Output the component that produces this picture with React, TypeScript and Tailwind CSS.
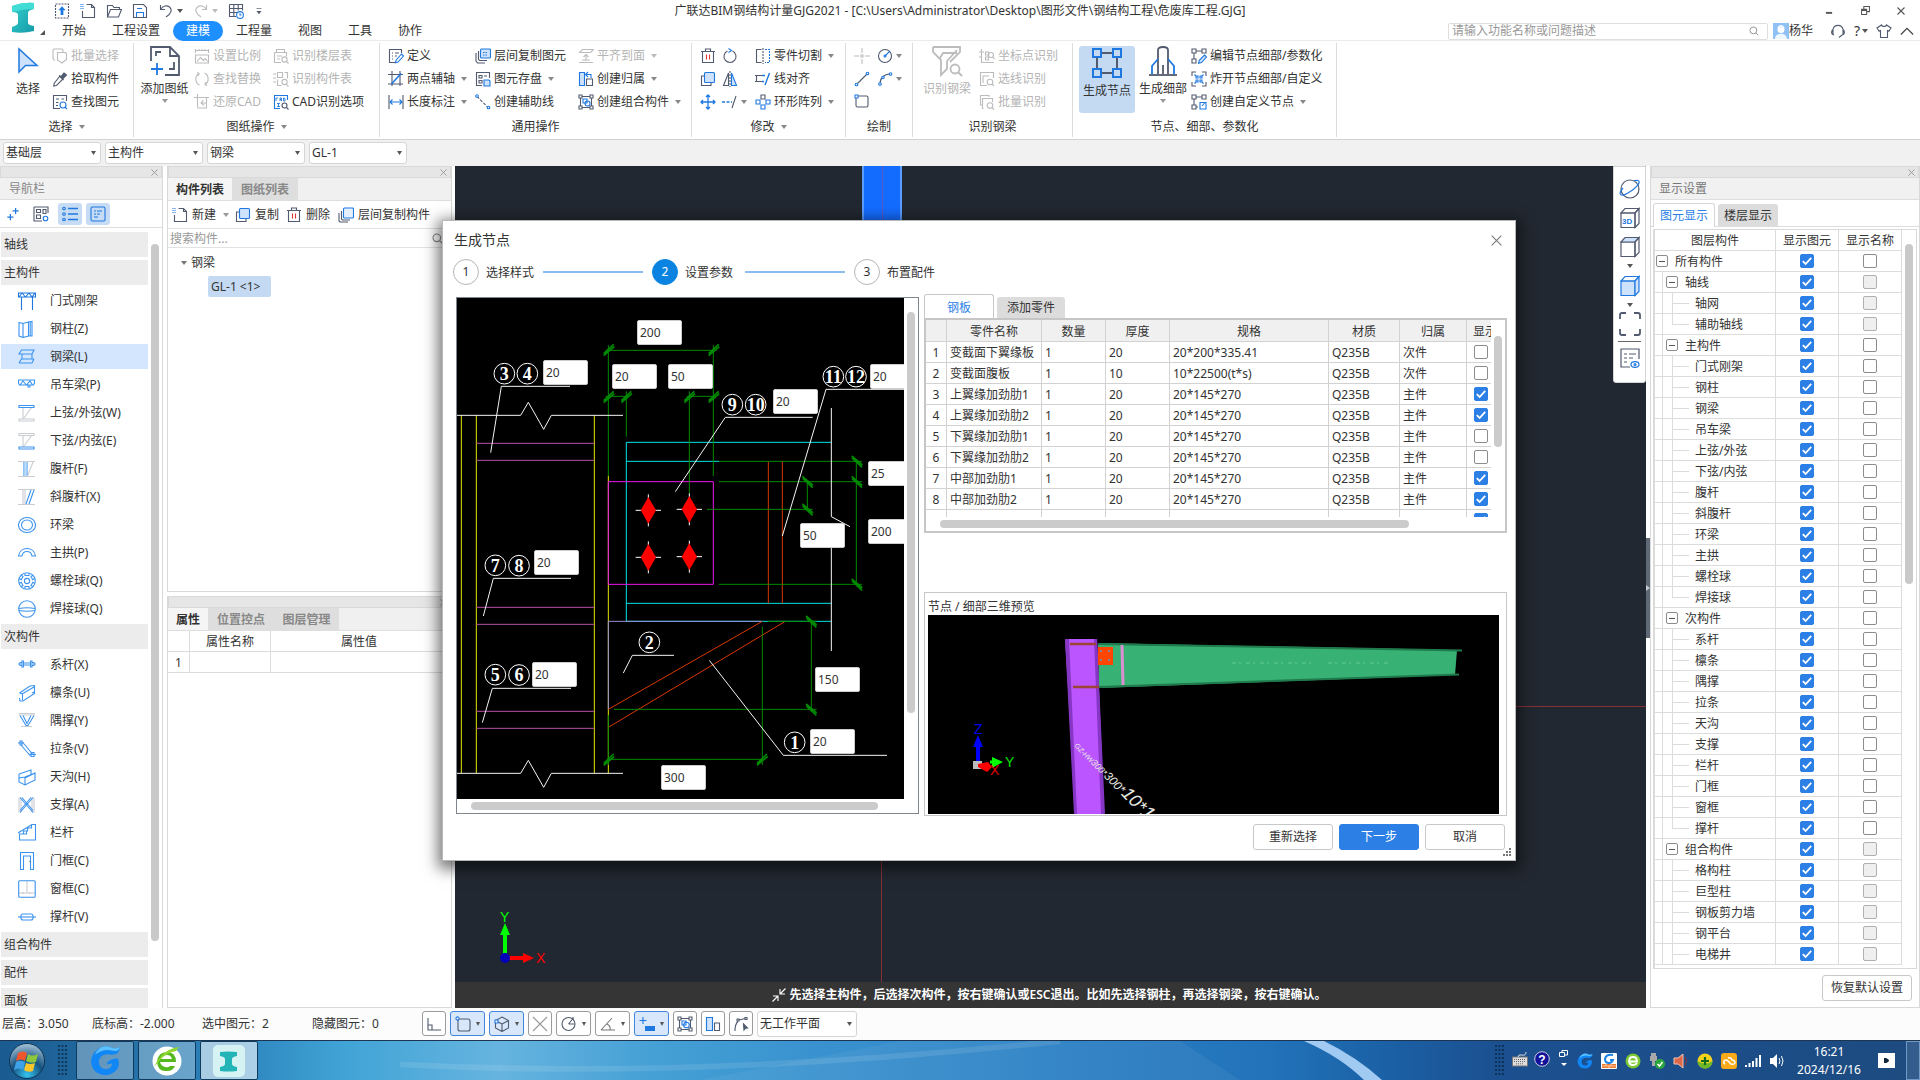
import React from "react";

const FONT = "font-['Noto_Sans','Noto_Sans_CJK_SC',sans-serif]";
const D = "#515a6e";
const B = "#1f78e0";
const G = "#bcbcbc";

/* ---------- shared bits ---------- */

function Svg({ size = 16, children, stroke = D, vb = "0 0 16 16" }: { size?: number; children: React.ReactNode; stroke?: string; vb?: string }) {
  return (
    <svg width={size} height={size} viewBox={vb} fill="none" stroke={stroke} strokeWidth={1.1} className="shrink-0" aria-hidden="true">
      {children}
    </svg>
  );
}

function Arrow({ color = "#777" }: { color?: string }) {
  return (
    <svg width="6" height="4" viewBox="0 0 6 4" className="shrink-0" aria-hidden="true">
      <path d="M0 0h6L3 4z" fill={color} />
    </svg>
  );
}

function Cross({ size = 8, color = "#8a8a8a" }: { size?: number; color?: string }) {
  return (
    <svg width={size} height={size} viewBox="0 0 8 8" stroke={color} strokeWidth={size > 10 ? 0.8 : 1.1} className="shrink-0" aria-hidden="true">
      <path d="M.5.5l7 7M7.5.5l-7 7" />
    </svg>
  );
}

function Check({ label, checked, disabled = false }: { label: string; checked: boolean; disabled?: boolean }) {
  return (
    <span className="inline-grid size-[14px] align-middle">
      <input
        type="checkbox"
        aria-label={label}
        defaultChecked={checked}
        disabled={disabled}
        className="peer col-start-1 row-start-1 size-[14px] appearance-none rounded-[2px] border border-[#8c8c8c] bg-white checked:border-[#2b7fe5] checked:bg-[#2b7fe5] disabled:border-[#b0b0b0] disabled:bg-[#efefef]"
      />
      <svg viewBox="0 0 14 14" className="pointer-events-none col-start-1 row-start-1 hidden size-[14px] peer-checked:block" fill="none" stroke="#fff" strokeWidth="1.8" aria-hidden="true">
        <path d="M2.8 7.2l2.8 2.8 5.6-6.2" />
      </svg>
    </span>
  );
}

function Combo({ label, options, cls }: { label: string; options: string[]; cls: string }) {
  return (
    <span className={`inline-grid items-center ${cls}`}>
      <select aria-label={label} className="col-start-1 row-start-1 h-full w-full appearance-none rounded-[3px] border border-[#d5d5d5] bg-white pl-[2px] text-xs text-[#333]">
        {options.map((o) => (
          <option key={o}>{o}</option>
        ))}
      </select>
      <span className="pointer-events-none col-start-1 row-start-1 mr-[5px] justify-self-end">
        <svg width="5" height="4" viewBox="0 0 5 4" className="block" aria-hidden="true">
          <path d="M0 0h5L2.5 4z" fill="#555" />
        </svg>
      </span>
    </span>
  );
}

/* ---------- icons ---------- */

const ic: Record<string, React.ReactNode> = {
  upload: <Svg><rect x="1.5" y="1" width="13" height="14" strokeDasharray="2 1" /><path d="M8 3.2l3.6 4H9.4V12H6.600V7.200H4.400z" fill={B} stroke="none" /></Svg>,
  newdoc: <Svg><path d="M6.500 1.500h5l3 3v10h-12V8" /><path d="M11.500 1.500v3h3" /><path d="M.5 1.500h4M.5 3.500h4M.5 5.500h4M1 1v5M3 1v5" stroke={B} strokeDasharray="1 1" /></Svg>,
  open: <Svg><path d="M1.500 14V2.500h5l1.500 2h5.500v2M1.500 14l3-7.500h11L12.500 14z" /></Svg>,
  save: <Svg><path d="M1.500 1.500h10l3 3v10h-13z" /><path d="M4.500 14V9.500h7V14M5 5.500h5" stroke={B} /></Svg>,
  undo: <Svg><path d="M2.500 2v4.500H7M2.500 6.500C5 2.500 9 2 11.500 4c3 2.500 2 6.500-3.500 10" /></Svg>,
  redo: <Svg stroke={G}><path d="M13.500 2v4.500H9M13.500 6.500C11 2.500 7 2 4.500 4c-3 2.500-2 6.500 3.500 10" /></Svg>,
  grid: <Svg><path d="M1.500 1.500h13v6M1.500 1.500v12H8M1.500 5.500h13M1.500 9.500H9M5.800 1.500v12M10.200 1.500v6" /><circle cx="12" cy="12" r="3.400" stroke={B} /><path d="M12 10.300V12h1.600" stroke={B} /></Svg>,
  more: <Svg size={10}><path d="M4 4h8" /><path d="M4 8h8l-4 5z" fill={D} stroke="none" /></Svg>,
  batch: <Svg stroke={G}><path d="M3 12H2L1 10V2l1-1h8l1 1v2M5.500 4.500h8l1 1v6L10 15l-4.500-3z" /></Svg>,
  pick: <Svg><path d="M8 5l3 3-6.500 6.500-2.800.6.600-2.900z" /><path d="M7 4.500l4.500 4.500M9 5.500L12 2l2.500 2L11 7.500z" fill={D} /></Svg>,
  find: <Svg><path d="M14.500 7V1.500h-13v13H8" /><path d="M4 5h3M4 8.500h2.500M4 11.500h2M9.500 5H12" /><circle cx="11" cy="11" r="3" stroke={B} /><path d="M13 13l2 2" stroke={B} /></Svg>,
  scale: <Svg stroke={G}><path d="M1 2.500h14M1.500 1v4M14.500 1v4M5 1v2M8 1v2M11 1v2M1.500 7h13v8h-13zM3 13.500l3.500-4 3 3 2-2 2 3" /></Svg>,
  replace: <Svg stroke={G}><path d="M5.500 14C1 12 .500 5 5 2.500L3 1.500M5 2.500l-1 2.500M10.500 2C15 4 15.500 11 11 13.500l2 1M11 13.500l1-2.500" /></Svg>,
  restore: <Svg stroke={G}><path d="M3.500 0v13M0 3.500h15M12.500 3.500V14H3M9.500 6L7 9l3 2.500M7 9h5" /></Svg>,
  floor: <Svg stroke={G}><path d="M3.500 4.500v-3h8v3M1.500 4.500h12v4M1.500 4.500v10H8M4 8h5M4 11h3" /><circle cx="11.500" cy="11.500" r="2.600" /><path d="M13.500 13.500l2 2" /></Svg>,
  comp: <Svg stroke={G}><path d="M0 3h3M0 7h3M0 11h3M4.500 1.500h5v5h-5zM4.500 8.500v6h4M11.500 1.500h3v6" /><circle cx="11.500" cy="11" r="2.600" /><path d="M13.500 13.500l2 2" /></Svg>,
  cad: <Svg><path d="M14.500 6V1.500h-13v13H7" stroke={B} /><path d="M3 7V4h2M7 7V4h1.500v3M7 5.500h1.500M10.500 4v3h1.500V5l-.500-1zM4 9.500h3M5.500 9.500v3M4 12.500h3" stroke={B} strokeWidth={0.9} /><circle cx="11.500" cy="11.500" r="2.500" /><path d="M13.500 13.500l2 2" /></Svg>,
  define: <Svg><path d="M13.500 5V1.500h-12v13h6M4 5h1M7 5h4M4 8h1M7 8h2M4 11h1" /><path d="M13.500 6l2 2-5.500 6-2.500.800.600-2.600z" stroke={B} /></Svg>,
  axis2: <Svg><path d="M4 0v15M0 3.500h15M12 0v15M0 13h15" /><path d="M3.500 13L13 2.500" stroke={B} strokeWidth={1.600} /></Svg>,
  length: <Svg><path d="M1 1v14M15 1v14" /><path d="M2 8h12M4.500 5.500L2 8l2.500 2.500M11.500 5.500L14 8l-2.500 2.500" stroke={B} /></Svg>,
  layercopy: <Svg><path d="M1 5v8l1.500 2H10M3.500 3v8l1 1.500H12" /><rect x="5.500" y="1" width="10" height="9" rx="1" stroke={B} fill="#cfe2fb" /><path d="M8 4.500h5M8 7h5" stroke={B} strokeDasharray="1.500 1" /></Svg>,
  store: <Svg><path d="M14.500 7V1.500h-13v13H7" /><path d="M4 4.500h3v2.500H4zM9 5h3M4 9.500h3V12H4z" /><path d="M9 9h5l1 1v5H9z" stroke={B} fill="#cfe2fb" /></Svg>,
  auxline: <Svg stroke={B}><path d="M2 2.500l11 11" stroke={D} strokeDasharray="3 1.500" /><circle cx="2" cy="2" r="1.300" fill="#fff" /><circle cx="13.500" cy="13.500" r="1.300" fill="#fff" /></Svg>,
  flush: <Svg stroke={G}><path d="M4.500 1.500h11l-3 3h-11zM1 14.500h14M8 13V7M5.500 9L8 6.500 10.500 9M4 12h8" /></Svg>,
  belong: <Svg><path d="M1.500 1.500h5v13h-5z" stroke={B} fill="#cfe2fb" /><path d="M8.500 8h6v6.500h-6z" /><path d="M8 3.500h5V7M10 1L7.500 3.500 10 6" stroke={B} /></Svg>,
  group: <Svg><path d="M2.500 2.500h11v11h-11z" /><path d="M1 1h3v3H1zM12 1h3v3h-3zM1 12h3v3H1zM12 12h3v3h-3z" fill="#fff" /><path d="M5 5h4v4H5z" stroke={B} /><circle cx="9.500" cy="9.500" r="2.500" stroke={B} /></Svg>,
  trash: <Svg><path d="M1 3.500h14M5.500 3V1h5v2M2.500 3.500v11h11v-11" /><path d="M6.500 6.500v5M9.500 6.500v5" stroke="#d33" /></Svg>,
  rotate: <Svg><path d="M10.500 3a6 6 0 1 1-5 0" /><path d="M6.500.500l3 2-3 2" stroke={B} /></Svg>,
  split: <Svg><path d="M6.500 1.500h-5v13h5" /><path d="M8 0v16" stroke={D} strokeDasharray="2 1" /><path d="M10 1.500h4.500v13H10" stroke={B} strokeDasharray="2 1" /></Svg>,
  copy: <Svg><path d="M4 5H1.500v9.500H11V12" /><rect x="4.500" y="1.500" width="10" height="10" rx="1" stroke={B} fill="#cfe2fb" /></Svg>,
  mirror: <Svg><path d="M6.500 2v12.500h-5z" /><path d="M9.500 2v12.500h5z" stroke={B} fill="#cfe2fb" /><path d="M8 0v16" strokeDasharray="2 1" /></Svg>,
  align: <Svg><path d="M0 4.500h7M1.500 4.500v6M0 10.500h7" /><path d="M7 4.500h3M7 10.500h2M10 14l4.500-12" stroke={B} strokeWidth={1.400} /></Svg>,
  move: <Svg stroke={B}><path d="M8 1v14M1 8h14M6 3l2-2 2 2M6 13l2 2 2-2M3 6L1 8l2 2M13 6l2 2-2 2" strokeWidth={1.300} /></Svg>,
  extend: <Svg><path d="M0 8h10" stroke={B} strokeDasharray="3 1.500" strokeWidth={1.400} /><path d="M10 14l4-12" /></Svg>,
  array: <Svg><path d="M6 1h4v4H6z" /><path d="M1 6h4v4H1zM11 6h4v4h-4zM6 11h4v4H6z" stroke={B} /></Svg>,
  point: <Svg stroke={G}><path d="M8 0v5M8 11v5M0 8h5M11 8h5M7 7h2v2H7z" /></Svg>,
  circle: <Svg><circle cx="8" cy="8" r="6.500" /><path d="M8 8l4.500-4.500" stroke={B} /><circle cx="8" cy="8" r="1" stroke={B} /></Svg>,
  line: <Svg><path d="M2.500 13.500l11-11" /><circle cx="2.500" cy="13.500" r="1.300" stroke={B} fill="#fff" /><circle cx="13.500" cy="2.500" r="1.300" stroke={B} fill="#fff" /></Svg>,
  arc: <Svg><path d="M3 13C3 7 7 3 13 3" /><circle cx="3" cy="13" r="1.300" stroke={B} fill="#fff" /><circle cx="13.500" cy="3" r="1.300" stroke={B} fill="#fff" /><circle cx="6" cy="6.500" r="1.200" stroke={B} fill="#fff" /></Svg>,
  rect: <Svg><rect x="2" y="2" width="12" height="11" rx="1.500" /><path d="M1 1h3v3H1z" stroke={B} fill="#fff" /></Svg>,
  coord: <Svg stroke={G}><path d="M2.500 1v13.500H15M0 4h5M0 9h2M6.500 4h3v3h-3zM6.500 9h3v3h-3z" /><circle cx="12" cy="7" r="2.500" /><path d="M13.500 9l2 2" /></Svg>,
  selline: <Svg stroke={G}><path d="M14.500 7V1.500h-13v13H8M4 12V5h6" /><circle cx="11" cy="11" r="2.800" /><path d="M13 13l2 2" /></Svg>,
  batchid: <Svg stroke={G}><path d="M3 11H1.500v-9.500H10V3M4.500 14.500h-1V4.500h10V8" /><circle cx="11" cy="11.500" r="2.800" /><path d="M13 13.500l2 2" /></Svg>,
  editnode: <Svg><path d="M1 1h4v4H1zM11 1h4v4h-4zM5 3h6M3 5v6M1 11h4v4H1z" /><path d="M13.500 7l2 2-5 5.500-3 .800.800-3z" stroke={B} fill="#cfe2fb" /></Svg>,
  explode: <Svg><path d="M1 5V1h4M11 1h4v4M1 11v4h4M15 11v4h-4" /><path d="M5 5h2v2H5zM9 5h2v2H9zM5 9h2v2H5zM9 9h2v2H9zM3.500 3.500l2 2M12.500 3.500l-2 2M3.500 12.500l2-2M12.500 12.500l-2-2" stroke={B} /></Svg>,
  custnode: <Svg><path d="M1 1h4v4H1zM11 1h4v4h-4zM5 3h6M3 5v6M1 11h4v4H1zM5 13h2" /><path d="M9 8.500h6v6.500H9z" stroke={B} /><path d="M14.500 8L11 12" stroke={B} /></Svg>,
};

function Item({ icon, text, arrow = false, off = false }: { icon: string; text: string; arrow?: boolean; off?: boolean }) {
  return (
    <button type="button" disabled={off} className={`flex h-[23px] items-center gap-[3px] whitespace-nowrap text-xs ${off ? "text-[#b4b4b4]" : "text-[#333]"}`}>
      {ic[icon]}
      {text}
      {arrow && <span className="ml-[3px]"><Arrow color={off ? G : "#888"} /></span>}
    </button>
  );
}

function IconButton({ icon, label, arrow = false }: { icon: string; label: string; arrow?: boolean }) {
  return (
    <button type="button" aria-label={label} className="flex h-[23px] items-center gap-[3px]">
      {ic[icon]}
      {arrow && <Arrow color="#888" />}
    </button>
  );
}

function Group({ label, cls, arrow = false, children }: { label: string; cls: string; arrow?: boolean; children: React.ReactNode }) {
  return (
    <section aria-label={label} className={`my-[2px] flex shrink-0 flex-col border-r border-[#dcdcdc] ${cls}`}>
      <div className="flex h-[74px] pt-px">{children}</div>
      <div className="flex h-5 items-center justify-center gap-[6px] text-xs text-[#333]">
        {label}
        {arrow && <Arrow color="#888" />}
      </div>
    </section>
  );
}

function Big({ text, cls, arrow = false, children }: { text: string; cls: string; arrow?: boolean; children: React.ReactNode }) {
  return (
    <button type="button" className={`flex flex-col items-center whitespace-nowrap rounded-[3px] text-xs ${cls}`}>
      <span className="flex h-[34px] items-center">{children}</span>
      <span className="mt-px leading-5">{text}</span>
      {arrow && <Arrow color="#999" />}
    </button>
  );
}

function Header() {
  const tabs = ["开始", "工程设置", "建模", "工程量", "视图", "工具", "协作"];
  return (
    <header className="grid h-[41px] shrink-0 grid-cols-[1fr_auto_1fr] border-b border-[#ebebeb] bg-white text-xs text-[#333]">
      <div className="flex">
        <div className="flex w-[49px] shrink-0 gap-[5px] pl-[11px] pt-[2px]">
          <svg width="24" height="32" viewBox="0 0 24 32" aria-hidden="true">
            <defs>
              <linearGradient id="lg" x1="0" y1="0" x2="1" y2="1">
                <stop offset="0" stopColor="#35d0cc" />
                <stop offset="1" stopColor="#159aa8" />
              </linearGradient>
            </defs>
            <path d="M1 4Q12 0 23 1v6q-6 1-6 4v10q0 2 6 3v5q-11 3-22 1v-5q6-2 6-4V13q0-3-6-3z" fill="url(#lg)" />
            <path d="M1 4Q12 0 23 1v6Q12 7 1 10z" fill="#41dcd3" />
          </svg>
          <svg width="5" height="5" viewBox="0 0 5 5" className="mt-[28px]" aria-hidden="true"><path d="M5 0v5H0z" fill="#555" /></svg>
        </div>
        <div className="flex flex-col">
          <div className="flex h-[21px] items-center gap-[10px] pl-[5px]">
            {["upload", "newdoc", "open", "save"].map((n) => (
              <button key={n} type="button" aria-label={n}>{ic[n]}</button>
            ))}
            <button type="button" aria-label="撤销" className="flex items-center gap-[3px]">{ic.undo}<Arrow color="#555" /></button>
            <button type="button" aria-label="恢复" className="flex items-center gap-[3px]">{ic.redo}<Arrow color={G} /></button>
            <button type="button" aria-label="表格">{ic.grid}</button>
            <button type="button" aria-label="更多">{ic.more}</button>
          </div>
          <nav className="flex h-5">
            {tabs.map((t) => (
              <button key={t} type="button" className={`whitespace-nowrap px-[13px] leading-5 ${t === "建模" ? "rounded-full bg-[#1e8fff] text-white" : ""}`}>{t}</button>
            ))}
          </nav>
        </div>
      </div>
      <h1 className="whitespace-nowrap pt-px leading-5">广联达BIM钢结构计量GJG2021 - [C:\Users\Administrator\Desktop\图形文件\钢结构工程\危废库工程.GJG]</h1>
      <div className="flex flex-col items-end">
        <div className="flex h-[21px] items-center gap-[27px] pr-[15px]">
          <button type="button" aria-label="最小化"><Svg size={10} stroke="#555"><path d="M3 11h10" strokeWidth={3} /></Svg></button>
          <button type="button" aria-label="还原"><Svg size={9} stroke="#555"><path d="M1 6h9v9H1zM5 6V1h10v9h-5M1 8h9" strokeWidth={1.800} /></Svg></button>
          <button type="button" aria-label="关闭"><Cross color="#555" /></button>
        </div>
        <div className="flex h-5 items-center pr-[6px]">
          <label className="mr-[5px] flex h-[17px] w-[320px] items-center rounded-[2px] border border-[#dedede] pl-[3px] pr-2">
            <input aria-label="搜索功能" placeholder="请输入功能名称或问题描述" className="h-[15px] min-w-0 flex-1 bg-transparent text-xs outline-none placeholder:text-[#999]" />
            <Svg size={10} stroke="#999"><circle cx="7" cy="7" r="5.500" strokeWidth={1.600} /><path d="M11 11l4 4" strokeWidth={1.600} /></Svg>
          </label>
          <svg width="16" height="16" viewBox="0 0 16 16" aria-hidden="true"><path d="M0 0h16v16H0z" fill="#8fc1f5" /><circle cx="8" cy="6.500" r="3.500" fill="#fff" /><path d="M4.500 5C5 1 11 1 11.500 5zM2 16c0-7 12-7 12 0z" fill="#eef6ff" /></svg>
          <span>杨华</span>
          <span className="ml-[17px] flex items-center gap-2">
            <Svg><path d="M4 12C0 11 2 7 3 6.500 4 1 12 1 13 6.500c1 .500 3 4.500-1 5.500l-3 2.500M3 6.500v5M13 6.500v5" /></Svg>
            <span className="flex items-center gap-[2px] text-sm leading-4">?<Arrow color="#555" /></span>
            <Svg><path d="M5.500 2C6 4 10 4 10.500 2L15 5l-2 3-1.500-.500v7h-7v-7L3 8 1 5z" /></Svg>
            <Svg size={14} stroke="#444"><path d="M1 12l7-7 7 7" strokeWidth={1.400} /></Svg>
          </span>
        </div>
      </div>
    </header>
  );
}

function Ribbon() {
  return (
    <div className="flex h-[99px] shrink-0 border-b border-[#d3d3d3] bg-white text-[#333]">
      <Group label="选择" arrow cls="w-[134px]">
        <Big text="选择" cls="ml-1 w-12">
          <svg width="22" height="30" viewBox="0 0 22 30" aria-hidden="true"><path d="M2 3v23l6.500-6.500H20z" fill="#cfe2fb" stroke={B} strokeWidth="1.500" /></svg>
        </Big>
        <div>
          <Item icon="batch" text="批量选择" off />
          <Item icon="pick" text="拾取构件" />
          <Item icon="find" text="查找图元" />
        </div>
      </Group>
      <Group label="图纸操作" arrow cls="w-[246px]">
        <Big text="添加图纸" arrow cls="ml-[2px] mr-px w-[57px]">
          <svg width="32" height="32" viewBox="0 0 32 32" fill="none" stroke={D} strokeWidth="1.800" aria-hidden="true">
            <path d="M2 16V2h19l9 9v19H16M21 2v9h9" /><path d="M7 11V7h5M20 24h5v-7" /><path d="M8 18v12M2 24h12" stroke={B} />
          </svg>
        </Big>
        <div className="w-[79px]">
          <Item icon="scale" text="设置比例" off />
          <Item icon="replace" text="查找替换" off />
          <Item icon="restore" text="还原CAD" off />
        </div>
        <div>
          <Item icon="floor" text="识别楼层表" off />
          <Item icon="comp" text="识别构件表" off />
          <Item icon="cad" text="CAD识别选项" />
        </div>
      </Group>
      <Group label="通用操作" cls="w-[312px]">
        <div className="w-[95px] pl-2">
          <Item icon="define" text="定义" />
          <Item icon="axis2" text="两点辅轴" arrow />
          <Item icon="length" text="长度标注" arrow />
        </div>
        <div className="w-[103px]">
          <Item icon="layercopy" text="层间复制图元" />
          <Item icon="store" text="图元存盘" arrow />
          <Item icon="auxline" text="创建辅助线" />
        </div>
        <div>
          <Item icon="flush" text="平齐到面" arrow off />
          <Item icon="belong" text="创建归属" arrow />
          <Item icon="group" text="创建组合构件" arrow />
        </div>
      </Group>
      <Group label="修改" arrow cls="w-[154px]">
        <div className="w-[30px] pl-2">
          <IconButton icon="trash" label="删除" />
          <IconButton icon="copy" label="复制" />
          <IconButton icon="move" label="移动" />
        </div>
        <div className="w-[33px]">
          <IconButton icon="rotate" label="旋转" />
          <IconButton icon="mirror" label="镜像" />
          <IconButton icon="extend" label="延伸" arrow />
        </div>
        <div>
          <Item icon="split" text="零件切割" arrow />
          <Item icon="align" text="线对齐" />
          <Item icon="array" text="环形阵列" arrow />
        </div>
      </Group>
      <Group label="绘制" cls="w-[67px]">
        <div className="w-[31px] pl-2">
          <IconButton icon="point" label="点" />
          <IconButton icon="line" label="直线" />
          <IconButton icon="rect" label="矩形" />
        </div>
        <div>
          <IconButton icon="circle" label="圆" arrow />
          <IconButton icon="arc" label="弧" arrow />
        </div>
      </Group>
      <Group label="识别钢梁" cls="w-[160px]">
        <Big text="识别钢梁" cls="ml-[6px] mr-1 w-14 text-[#b4b4b4]">
          <svg width="32" height="32" viewBox="0 0 32 32" fill="none" stroke={G} strokeWidth="1.800" aria-hidden="true">
            <path d="M2 2h27v5L19 17M2 2v5l8 8v15l6-6v-8M26 5L16 16M9 13l3-5h14" /><circle cx="24" cy="24" r="4.500" /><path d="M27 27l4 4" />
          </svg>
        </Big>
        <div>
          <Item icon="coord" text="坐标点识别" off />
          <Item icon="selline" text="选线识别" off />
          <Item icon="batchid" text="批量识别" off />
        </div>
      </Group>
      <Group label="节点、细部、参数化" cls="w-[264px]">
        <Big text="生成节点" cls="ml-[6px] mr-px mt-[2px] h-[67px] w-14 bg-[#c3daf2]">
          <svg width="32" height="30" viewBox="0 0 32 30" fill="none" stroke={D} strokeWidth="2" aria-hidden="true">
            <path d="M10 5h12M10 25h12M6 9v12M26 9v12" /><path d="M2 1h8v8H2zM22 1h8v8h-8zM2 21h8v8H2zM22 21h8v8h-8z" stroke={B} />
          </svg>
        </Big>
        <Big text="生成细部" arrow cls="mr-px w-[54px]">
          <svg width="30" height="32" viewBox="0 0 30 32" fill="none" stroke={D} strokeWidth="1.800" aria-hidden="true">
            <path d="M10 29V5q0-3 5-3t5 3v24M15 20v9" /><path d="M10 14l-6 7v8M20 14l6 7v8" stroke={B} /><path d="M1 30h28" />
          </svg>
        </Big>
        <div>
          <Item icon="editnode" text="编辑节点细部/参数化" />
          <Item icon="explode" text="炸开节点细部/自定义" />
          <Item icon="custnode" text="创建自定义节点" arrow />
        </div>
      </Group>
    </div>
  );
}

/* ---------- left navigation ---------- */

const L = "#c9ccd1";
const N = "#3b93ee";
const nav: { head?: string; text?: string; icon?: React.ReactNode }[] = [
  { head: "轴线" },
  { head: "主构件" },
  { text: "门式刚架", icon: <><path d="M.5 1h17v4H.5zM3.500 5v13M14.500 5v13M1 5l3-4 3.500 4L11 1l3 4 3-4" stroke={B} /></> },
  { text: "钢柱(Z)", icon: <path d="M1 2.500l4 1v14l-4-1.500zM5 3.500L10.500 2v14L5 17.500M10.500 2L14 1.500v14.500h-3.500M12.200 2v14" /> },
  { text: "钢梁(L)", icon: <path d="M3.500 2H16l-2 4H1zM4 6v5M14 6v5M3.500 11H16M1 15l2.500-4M1 15h13l2-4" /> },
  { text: "吊车梁(P)", icon: <path d="M.500 4h16v3l-1 2h-14l-1-2zM2 9l3-4 3.500 4L12 5l2.500 4M10 9v2h2V9" /> },
  { text: "上弦/外弦(W)", icon: <><path d="M5 3v12M6 14l8-11M1 15h15v2H1z" stroke={L} /><path d="M1 1.500h15v2H1z" /></> },
  { text: "下弦/内弦(E)", icon: <><path d="M5 3v12M6 14l8-11M1 1.500h15v2H1z" stroke={L} /><path d="M1 15h15v2H1z" /></> },
  { text: "腹杆(F)", icon: <><path d="M0 1.500h17M0 16.500h17M10 15l5-13" stroke={L} /><path d="M6 2v14M9 2v14" /><path d="M7.500 2v14" stroke="#bcdcfb" strokeWidth="2" /></> },
  { text: "斜腹杆(X)", icon: <><path d="M0 1.500h17M0 16.500h17M5 2v14M7 2v14" stroke={L} /><path d="M8 16l5-14M11 16l5-14" /></> },
  { text: "环梁", icon: <><ellipse cx="9" cy="9" rx="8.500" ry="7.500" /><ellipse cx="9" cy="9" rx="5.500" ry="5" /></> },
  { text: "主拱(P)", icon: <path d="M.5 12C2 2 16 2 17.500 12h-3.500C13 6 5 6 4 12z" /> },
  { text: "螺栓球(Q)", icon: <><circle cx="9" cy="9" r="8.300" /><circle cx="9" cy="9" r="2.600" /><path d="M7 1.200v2.300h4V1.200M7 16.800v-2.300h4v2.300M1.200 6.500l2 1.200 1.800-3.200-2-1.200M16.800 6.500l-2 1.200L13 4.500l2-1.200M1.200 11.500l2-1.200L5 13.500l-2 1.200M16.800 11.500l-2-1.200-1.800 3.200 2 1.200" /></> },
  { text: "焊接球(Q)", icon: <><circle cx="9" cy="9" r="8.300" /><path d="M1 8.500q8-1.500 16 0M1 10.500q8 1.500 16 0" /></> },
  { head: "次构件" },
  { text: "系杆(X)", icon: <path d="M0 8h2M16 8h2M2 6.500h2v3H2zM14 6.500h2v3h-2zM4 5h1.500v6H4zM12.500 5H14v6h-1.500zM5.500 7h7M5.500 9h7" /> },
  { text: "檩条(U)", icon: <path d="M1.500 9L12 2l4.500-.500v8L5 17H2l-.500-3M4 10L16 3M1.500 9l3 1v6M14 9l2.500-1" /> },
  { text: "隅撑(Y)", icon: <><path d="M1 1.500h16M3 14.500h11M1 3h16" stroke={L} /><path d="M2 3.500l6 10h2l6-10M5 3.500l4 8 4-8" /></> },
  { text: "拉条(V)", icon: <path d="M0 3h6M2 1v4h2V1zM4.500 2l10 12M3 5l9 10.500M13 12.500v4h3v-4zM11 14.500h7" /> },
  { text: "天沟(H)", icon: <path d="M1 6l12-4v5M1 6v8l6 3 10-5V5l-4 2L7 10v7M1 10l6-1 10-4" /> },
  { text: "支撑(A)", icon: <><path d="M1 1.500v15M3 1.500v15M14 1.500v15M16 1.500v15" stroke={L} /><path d="M2 1.500l13 15M15 1.500l-13 15M4 1.500l11 13M2 14.500l11-13" /></> },
  { text: "栏杆", icon: <path d="M0 9L14 .500h3.500V16h-16v-6h4V7h4V4h4V1M5.500 10h3V7" /> },
  { text: "门框(C)", icon: <><path d="M2.500 17.500V.5h13v17h-3V4h-7v13.500z" /><path d="M12 9v1" stroke={D} /></> },
  { text: "窗框(C)", icon: <><path d="M9 1v12M1 13h16M5 12v2M12 12v2" stroke={L} /><rect x=".700" y=".700" width="16.500" height="16.500" rx="1" /></> },
  { text: "撑杆(V)", icon: <><rect x="3" y="6" width="12" height="6" rx="2" /><path d="M0 9h18" /></> },
  { head: "组合构件" },
  { head: "配件" },
  { head: "面板" },
];

function Strip() {
  return (
    <div className="flex h-3 shrink-0 items-center justify-end border border-[#d9d9d9] bg-[#e6e6e6] pr-[3px]">
      <button type="button" aria-label="关闭面板"><Cross size={7} color="#999" /></button>
    </div>
  );
}

function NavPanel() {
  const on = "bg-[#c5dcf4]";
  return (
    <aside className="flex w-[163px] shrink-0 flex-col border-r border-[#d9d9d9] bg-white">
      <Strip />
      <div className="h-[22px] shrink-0 border-b border-[#dedede] bg-[#f1f1f1] pl-[9px] text-xs leading-[22px] text-[#888]">导航栏</div>
      <div className="flex h-7 shrink-0 items-center border-b border-[#dedede] pl-[6px]">
        <button type="button" aria-label="添加" className="flex w-[20px] justify-start"><Svg size={14} stroke={B}><path d="M11 1v7M7.500 4.500h7M5 8v7M1.500 11.500h7" strokeWidth={1.400} /></Svg></button>
        <button type="button" aria-label="布局" className="mr-[2px] flex w-[30px] justify-center"><Svg><path d="M1 1h14v6M1 1v14h8M3.500 3.500h4v3h-4zM10 3.500h3v4h-3zM3.500 9h4v3.500h-4z" /><circle cx="12.500" cy="12.500" r="2.300" stroke={B} /></Svg></button>
        <button type="button" aria-label="列表" className={`flex h-[22px] w-6 items-center justify-center rounded-[3px] ${on}`}><Svg stroke={B}><path d="M6 2.500h10M6 8h10M6 13.500h10" strokeWidth={1.300} /><circle cx="2" cy="2.500" r="1.300" /><circle cx="2" cy="8" r="1.300" /><circle cx="2" cy="13.500" r="1.300" /></Svg></button>
        <button type="button" aria-label="详情" className={`ml-1 flex h-[22px] w-6 items-center justify-center rounded-[3px] ${on}`}><Svg stroke={B}><rect x="1" y="1" width="14" height="14" rx="1.500" /><path d="M4 5h2M7 5h5M4 8h2M7 8h3M4 11h4" /></Svg></button>
      </div>
      <div className="flex min-h-0 flex-1 gap-[3px] overflow-hidden pl-px pt-1">
        <ul className="flex w-[147px] flex-col gap-[3px]">
          {nav.map((n) =>
            n.head ? (
              <li key={n.head} className="h-[25px] shrink-0 bg-[#ececec] pl-[3px] text-xs leading-[26px] text-[#333]">{n.head}</li>
            ) : (
              <li key={n.text} className="shrink-0">
                <button type="button" className={`flex h-[25px] w-full items-center gap-[14px] pl-[17px] text-xs text-[#333] ${n.text === "钢梁(L)" ? "bg-[#d3e6fd]" : ""}`}>
                  <Svg size={18} vb="0 0 18 18" stroke={N}>{n.icon}</Svg>
                  {n.text}
                </button>
              </li>
            )
          )}
        </ul>
        <div className="mt-3 h-[697px] w-2 rounded-full bg-[#c9c9c9]" />
      </div>
    </aside>
  );
}

function MidColumn() {
  return (
    <div className="ml-1 flex w-[285px] shrink-0 flex-col gap-1">
      <section className="flex h-[426px] shrink-0 flex-col border-x border-b border-[#d9d9d9] bg-white text-xs text-[#333]">
        <Strip />
        <div className="flex h-[23px] shrink-0 border-b border-[#dedede] bg-[#f0f0f0] font-semibold">
          <button type="button" className="w-[64px] bg-[#f5f5f5] pt-[2px]">构件列表</button>
          <button type="button" className="w-[66px] bg-[#dedede] pt-[2px] text-[#888]">图纸列表</button>
        </div>
        <div className="flex h-7 shrink-0 items-center gap-[3px] whitespace-nowrap border-b border-[#e2e2e2] pl-1">
          <button type="button" className="flex items-center gap-1">{ic.newdoc}新建<span className="mx-[3px]"><Arrow color="#999" /></span></button>
          <button type="button" className="flex items-center gap-1">{ic.copy}复制</button>
          <button type="button" className="ml-1 flex items-center gap-1">{ic.trash}删除</button>
          <button type="button" className="ml-[5px] flex items-center gap-1"><Svg><path d="M1 6v8l1 1h8M3.500 4v8l1 1H12" /><rect x="5.500" y="1" width="10" height="10" rx="1" stroke={B} fill="#e6f0fd" /></Svg>层间复制构件</button>
        </div>
        <div className="flex h-[19px] shrink-0 items-center border-b border-[#e2e2e2] pl-[2px] pr-2">
          <input aria-label="搜索构件" placeholder="搜索构件..." className="h-[18px] min-w-0 flex-1 text-xs outline-none placeholder:text-[#999]" />
          <Svg size={11} stroke="#888"><circle cx="7" cy="7" r="5.500" strokeWidth={1.600} /><path d="M11 11l4 4" strokeWidth={1.600} /></Svg>
        </div>
        <div className="pl-[13px] pt-[5px]">
          <div className="flex h-5 items-center gap-1"><Arrow color="#777" />钢梁</div>
          <div className="ml-[27px] mt-[3px] h-[21px] w-[63px] rounded-[2px] bg-[#c3daf2] pl-[3px] leading-[22px]">GL-1 &lt;1&gt;</div>
        </div>
      </section>
      <section className="flex min-h-0 flex-1 flex-col border-x border-b border-[#d9d9d9] bg-white text-xs text-[#333]">
        <Strip />
        <div className="flex h-[23px] shrink-0 border-b border-[#dedede] bg-[#f0f0f0] font-semibold">
          <button type="button" className="w-[40px] bg-[#f5f5f5] pt-[2px]">属性</button>
          <button type="button" className="w-[66px] bg-[#dedede] pt-[2px] text-[#888]">位置控点</button>
          <button type="button" className="w-[65px] bg-[#dedede] pt-[2px] text-[#888]">图层管理</button>
        </div>
        <table className="w-full table-fixed border-separate border-spacing-0">
          <thead>
            <tr>
              <th aria-label="序号" className="h-[21px] w-[22px] border-b border-r border-[#dcdcdc] p-0" />
              <th className="w-[81px] border-b border-r border-[#dcdcdc] p-0 pt-[2px] font-normal">属性名称</th>
              <th className="border-b border-[#dcdcdc] p-0 pr-1 pt-[2px] font-normal">属性值</th>
            </tr>
          </thead>
          <tbody>
            <tr>
              <td className="h-[21px] border-b border-r border-[#dcdcdc] p-0 pt-px text-center">1</td>
              <td className="border-b border-r border-[#dcdcdc] p-0" />
              <td className="border-b border-[#dcdcdc] p-0" />
            </tr>
          </tbody>
        </table>
      </section>
    </div>
  );
}

/* ---------- right settings panel ---------- */

type Row = { t: string; l: number; off?: boolean; last?: boolean };
const rows: Row[] = [
  { t: "所有构件", l: 0 },
  { t: "轴线", l: 1, off: true },
  { t: "轴网", l: 2, off: true },
  { t: "辅助轴线", l: 2, off: true, last: true },
  { t: "主构件", l: 1 },
  ...["门式刚架", "钢柱", "钢梁", "吊车梁", "上弦/外弦", "下弦/内弦", "腹杆", "斜腹杆", "环梁", "主拱", "螺栓球"].map((t) => ({ t, l: 2 })),
  { t: "焊接球", l: 2, last: true },
  { t: "次构件", l: 1 },
  ...["系杆", "檩条", "隅撑", "拉条", "天沟", "支撑", "栏杆", "门框", "窗框"].map((t) => ({ t, l: 2 })),
  { t: "撑杆", l: 2, last: true },
  { t: "组合构件", l: 1, off: true },
  ...["格构柱", "巨型柱", "钢板剪力墙", "钢平台", "电梯井"].map((t) => ({ t, l: 2, off: true })),
];

function Minus() {
  return (
    <button type="button" aria-label="折叠" className="flex size-3 shrink-0 items-center justify-center rounded-[2px] border border-[#8c8c8c] bg-white">
      <span className="h-px w-[6px] bg-[#555]" />
    </button>
  );
}

function SettingsPanel() {
  return (
    <aside className="ml-1 flex w-[270px] shrink-0 flex-col border-x border-b border-[#d9d9d9] bg-white text-xs text-[#333]">
      <Strip />
      <div className="h-[22px] shrink-0 border-b border-[#dedede] bg-[#f1f1f1] pl-2 leading-[22px] text-[#777]">显示设置</div>
      <div className="flex h-[27px] shrink-0 items-end gap-[3px] border-b border-[#dcdcdc] pl-[2px]">
        <button type="button" className="-mb-px h-6 w-[62px] rounded-t-[3px] border border-b-0 border-[#d6d6d6] bg-white text-[#2b7fe5]">图元显示</button>
        <button type="button" className="h-[22px] w-[60px] rounded-t-[3px] bg-[#dcdcdc] pt-px">楼层显示</button>
      </div>
      <div className="mx-[2px] mt-[2px] flex min-h-0 flex-1 overflow-hidden border border-[#d9d9d9]">
        <div className="w-[248px] overflow-hidden border-l border-[#dcdcdc]">
          <table className="w-full table-fixed border-separate border-spacing-0">
            <thead>
              <tr>
                <th className="h-[21px] w-[121px] border-b border-r border-[#dcdcdc] p-0 pt-[2px] font-normal">图层构件</th>
                <th className="w-[63px] border-b border-r border-[#dcdcdc] p-0 pt-[2px] font-normal">显示图元</th>
                <th className="border-b border-r border-[#dcdcdc] p-0 pt-[2px] font-normal">显示名称</th>
              </tr>
            </thead>
            <tbody>
              {rows.map((r) => (
                <tr key={r.t}>
                  <td className="h-[21px] border-b border-r border-[#dcdcdc] p-0">
                    <div className="flex h-5 items-center">
                      {r.l === 0 && <span className="ml-px mr-[7px] flex"><Minus /></span>}
                      {r.l > 0 && <span className="ml-[7px] h-full w-1 border-l border-[#dcdcdc]" />}
                      {r.l === 1 && <span className="mr-[7px] flex"><Minus /></span>}
                      {r.l === 2 && (
                        <span className="ml-[6px] mr-[6px] flex h-full w-[17px] flex-col">
                          <span className="flex-1 border-b border-l border-[#dcdcdc]" />
                          <span className={`flex-1 border-[#dcdcdc] ${r.last ? "" : "border-l"}`} />
                        </span>
                      )}
                      <span className="whitespace-nowrap pt-[2px]">{r.t}</span>
                    </div>
                  </td>
                  <td className="border-b border-r border-[#dcdcdc] p-0 text-center leading-none"><Check label={`${r.t} 显示图元`} checked /></td>
                  <td className="border-b border-r border-[#dcdcdc] p-0 text-center leading-none"><Check label={`${r.t} 显示名称`} checked={false} disabled={r.off} /></td>
                </tr>
              ))}
            </tbody>
          </table>
        </div>
        <div className="ml-[3px] mt-[14px] h-[340px] w-2 rounded-full bg-[#c9c9c9]" />
      </div>
      <div className="flex h-[38px] shrink-0 items-center justify-end pr-[7px]">
        <button type="button" className="h-[26px] w-[90px] rounded-[3px] border border-[#c8c8c8] bg-white">恢复默认设置</button>
      </div>
    </aside>
  );
}

/* ---------- dialog drawing ---------- */

function Slash({ x, y, flip = false }: { x: number; y: number; flip?: boolean }) {
  return <path d={flip ? `M${x - 15} ${y - 16}l32 27M${x - 14} ${y - 10}l30 28` : `M${x - 16} ${y + 16}l32 -27M${x - 16} ${y + 10}l30 -28`} strokeWidth="5" />;
}

function Num({ x, y, n }: { x: number; y: number; n: string }) {
  return (
    <g>
      <circle cx={x} cy={y} r="31" stroke="#fff" strokeWidth="3" fill="none" />
      <text x={x} y={y + 19} fill="#fff" stroke="none" textAnchor="middle" fontFamily="Liberation Serif, serif" fontWeight="bold" fontSize="54">{n}</text>
    </g>
  );
}

function Bolt({ x, y }: { x: number; y: number }) {
  return (
    <g>
      <path d={`M${x - 38} ${y}h76M${x} ${y - 48}v96`} stroke="#fff" strokeWidth="3" />
      <path d={`M${x} ${y - 40}l23 40l-23 40l-23 -40z`} fill="#f00" />
    </g>
  );
}

const fields: { v: string; x: number; y: number; label: string }[] = [
  { v: "200", x: 180, y: 22, label: "连接板宽" },
  { v: "20", x: 86, y: 62, label: "加劲肋3/4" },
  { v: "20", x: 155, y: 66, label: "间隙" },
  { v: "50", x: 211, y: 66, label: "边距" },
  { v: "20", x: 413, y: 66, label: "加劲肋11/12" },
  { v: "20", x: 316, y: 91, label: "连接板9/10" },
  { v: "25", x: 411, y: 163, label: "上边距" },
  { v: "50", x: 343, y: 225, label: "螺栓边距" },
  { v: "200", x: 411, y: 221, label: "连接板高" },
  { v: "20", x: 77, y: 252, label: "加劲肋7/8" },
  { v: "20", x: 75, y: 364, label: "加劲肋5/6" },
  { v: "150", x: 358, y: 369, label: "加腋高" },
  { v: "20", x: 353, y: 431, label: "翼缘板1" },
  { v: "300", x: 204, y: 467, label: "加腋长" },
];

function CadDrawing() {
  return (
    <div className="relative h-[501px] w-[447px] overflow-hidden bg-black">
      <svg width="447" height="501" viewBox="51 234 1341 1503" fill="none" strokeWidth="3" className="block">
        <g stroke="#e6e600"><path d="M64 586V1660M109 586V1660M463 586V1660M505 768V1660" /></g>
        <g stroke="#b750a5"><path d="M109 670H463M109 721H463M109 1162H463M109 1213H463M109 1474H463M109 1525H463" /></g>
        <g stroke="#00e5e5"><path d="M559 667H1174M559 724H837M559 667V1204M559 1150H1174M559 1204H1174" /></g>
        <g stroke="#f015f0"><path d="M505 785H820V1093H505z" /></g>
        <g stroke="#9a8fd8"><path d="M965 1204H505V1468" /></g>
        <g stroke="#d83800"><path d="M985 724V1150M1027 724V1150M505 1468L967 1204M505 1522L1036 1204" /></g>
        <g stroke="#008a00">
          <path d="M505 376V768M820 376V768M497 391H830M497 529H568M559 514V650M748 514V820M740 529H830" />
          <path d="M837 724H1266M837 785H1266M1249 724V1093M837 1093H1266M801 868H1118M1102 785V868" />
          <path d="M983 1204H1130M1114 1204V1468M522 1468H1130M967 1220V1635M505 1485V1635M505 1618H967" />
          <Slash x={507} y={391} /><Slash x={822} y={391} /><Slash x={507} y={532} /><Slash x={560} y={532} /><Slash x={749} y={532} /><Slash x={822} y={532} />
          <Slash x={1250} y={724} flip /><Slash x={1250} y={785} flip /><Slash x={1102} y={785} flip /><Slash x={1102} y={868} flip /><Slash x={1250} y={1093} flip />
          <Slash x={1113} y={1204} flip /><Slash x={1113} y={1468} flip /><Slash x={507} y={1620} /><Slash x={967} y={1620} />
        </g>
        <g stroke="#f4f4f4">
          <path d="M51 586H242L265 547L311 628L334 586H549M51 1660H242L265 1621L311 1702L334 1660H549" />
          <path d="M390 499H184L152 698M1118 592H856L706 815M1392 508H1158L1027 948M393 1075H160L130 1188M393 1405H157L127 1508M702 1306H577L550 1359M808 1321L1030 1606H1341" />
          <path d="M1174 564V890L1230 920M1174 970V1293" />
        </g>
        <Num x={193} y={461} n="3" /><Num x={262} y={461} n="4" />
        <Num x={877} y={554} n="9" /><Num x={947} y={554} n="10" />
        <Num x={1180} y={470} n="11" /><Num x={1248} y={470} n="12" />
        <Num x={166} y={1036} n="7" /><Num x={237} y={1037} n="8" />
        <Num x={166} y={1364} n="5" /><Num x={237} y={1365} n="6" />
        <Num x={628} y={1267} n="2" /><Num x={1064} y={1567} n="1" />
        <Bolt x={625} y={871} /><Bolt x={748} y={868} /><Bolt x={625} y={1012} /><Bolt x={748} y={1010} />
      </svg>
      {fields.map((f) => (
        <input key={f.label} aria-label={f.label} defaultValue={f.v} className="absolute h-[25px] w-[45px] rounded-[2px] border border-[#ccc] bg-white pl-[2px] text-xs text-[#333]" style={{ left: f.x, top: f.y }} />
      ))}
    </div>
  );
}

function Preview3D() {
  return (
    <svg width="571" height="199" viewBox="0 0 571 199" className="block bg-black">
      <path d="M170 28L529 35 527 60 171 73z" fill="#38b274" />
      <path d="M170 29L534 35.500M171 72L531 59.500" stroke="#1f7a4c" strokeWidth="2" />
      <path d="M304 48h80M400 48h60" stroke="#6ed09c" strokeDasharray="4 3 2 5" strokeWidth=".8" />
      <path d="M194 30l1 40" stroke="#d98fd0" strokeWidth="3" />
      <path d="M137 24h32l7 175h-28z" fill="#ba55ff" />
      <path d="M137 24h4l8 175h-3zM166 24h3l8 175h-4z" fill="#8636c4" />
      <path d="M142 29h26M145 72h26" stroke="#9c4436" strokeWidth="2.500" />
      <path d="M170 32h15v18h-15z" fill="#ff4500" />
      <path d="M172 36h2M180 36h2M172 45h2M180 45h2" stroke="#888" strokeWidth="2" />
      <text transform="translate(146 131) rotate(46)" fill="#e8e8e0" fontFamily="Liberation Sans, sans-serif" fontStyle="italic">
        <tspan fontSize="7">GZ-HW</tspan><tspan fontSize="9">300*</tspan><tspan fontSize="12">300*</tspan><tspan fontSize="18">10*</tspan><tspan fontSize="20">1</tspan>
      </text>
      <path d="M50 146v-16" stroke="#00f" strokeWidth="4" /><path d="M45 132l5-12 5 12z" fill="#00f" />
      <path d="M45 146h9v8h-9z" fill="#bbb" />
      <path d="M62 147h6" stroke="#0f0" strokeWidth="3" /><path d="M64 142l11 5-11 6z" fill="#0f0" />
      <path d="M50 149l10-2 4 5-5 5-9-5z" fill="#f00" />
      <g fontFamily="Liberation Sans, sans-serif" fontSize="14">
        <text x="46" y="119" fill="#0000ee">Z</text>
        <text x="77" y="152" fill="#00e000">Y</text>
        <text x="62" y="160" fill="#e00000">X</text>
      </g>
    </svg>
  );
}

const parts: [string, string, string, string, boolean][] = [
  ["变截面下翼缘板", "20", "20*200*335.41", "次件", false],
  ["变截面腹板", "10", "10*22500(t*s)", "次件", false],
  ["上翼缘加劲肋1", "20", "20*145*270", "主件", true],
  ["上翼缘加劲肋2", "20", "20*145*270", "主件", true],
  ["下翼缘加劲肋1", "20", "20*145*270", "主件", false],
  ["下翼缘加劲肋2", "20", "20*145*270", "主件", false],
  ["中部加劲肋1", "20", "20*145*270", "主件", true],
  ["中部加劲肋2", "20", "20*145*270", "主件", true],
];

function Step({ n, text, active = false }: { n: string; text: string; active?: boolean }) {
  return (
    <li className="flex items-center gap-[7px]">
      <span className={`flex size-[26px] items-center justify-center rounded-full border text-xs ${active ? "border-[#0a84e0] bg-[#0a84e0] text-white" : "border-[#b5b5b5] text-[#333]"}`}>{n}</span>
      <span className="w-12 whitespace-nowrap pt-[2px]">{text}</span>
    </li>
  );
}

function Dialog() {
  const cell = "overflow-hidden whitespace-nowrap border-b border-r border-[#d2d2d2] px-[3px] pb-0 pt-[2px]";
  const btn = "h-[26px] w-20 rounded-[3px] border";
  return (
    <div role="dialog" aria-label="生成节点" className="absolute left-[442px] top-[54px] z-10 flex h-[641px] w-[1074px] flex-col border border-[#b8b8b8] bg-white text-xs text-[#333] shadow-[0_4px_14px_4px_rgba(0,0,0,0.55)]">
      <div className="flex h-[38px] shrink-0 items-center justify-between pl-[11px] pr-[13px]">
        <h2 className="text-sm">生成节点</h2>
        <button type="button" aria-label="关闭"><Cross size={11} color="#777" /></button>
      </div>
      <ol className="flex h-[26px] shrink-0 items-center pl-[10px]">
        <Step n="1" text="选择样式" />
        <li aria-hidden="true" className="ml-[9px] mr-[9px] h-[2px] w-[100px] bg-[#8bbdec]" />
        <Step n="2" text="设置参数" active />
        <li aria-hidden="true" className="ml-3 mr-[9px] h-[2px] w-[100px] bg-[#8bbdec]" />
        <Step n="3" text="布置配件" />
      </ol>
      <div className="flex pl-[13px]">
        <div className="mt-3 h-[517px] w-[463px] border border-[#7f858d]">
          <div className="flex">
            <CadDrawing />
            <div className="ml-[3px] mt-[14px] h-[401px] w-2 rounded-full bg-[#cbcbcb]" />
          </div>
          <div className="ml-[14px] mt-[3px] h-2 w-[407px] rounded-full bg-[#cbcbcb]" />
        </div>
        <div className="ml-[5px] mt-[9px] w-[583px]">
          <div className="flex h-6 items-end gap-[3px]">
            <button type="button" className="h-6 w-[70px] rounded-t-[3px] border border-b-0 border-[#c8c8c8] bg-white pt-[2px] text-[#2b7fe5]">钢板</button>
            <button type="button" className="h-[21px] w-[68px] rounded-t-[3px] bg-[#dcdcdc] pt-px">添加零件</button>
          </div>
          <div className="h-[215px] border-2 border-[#c6c6c6]">
            <div className="flex">
              <div className="h-[197px] w-[565px] overflow-hidden">
                <table className="w-[600px] table-fixed border-separate border-spacing-0">
                  <thead>
                    <tr className="bg-[#f0f0f0]">
                      <th aria-label="序号" className={`h-[22px] w-[21px] ${cell}`} />
                      <th className={`w-[95px] font-normal ${cell}`}>零件名称</th>
                      <th className={`w-16 font-normal ${cell}`}>数量</th>
                      <th className={`w-16 font-normal ${cell}`}>厚度</th>
                      <th className={`w-[159px] font-normal ${cell}`}>规格</th>
                      <th className={`w-[71px] font-normal ${cell}`}>材质</th>
                      <th className={`w-[67px] font-normal ${cell}`}>归属</th>
                      <th className="overflow-hidden whitespace-nowrap border-b border-[#d2d2d2] pb-0 pl-[6px] pt-[2px] text-left font-normal">显示</th>
                    </tr>
                  </thead>
                  <tbody>
                    {parts.map((p, i) => (
                      <tr key={p[0]}>
                        <td className={`h-[21px] text-center ${cell}`}>{i + 1}</td>
                        <td className={cell}>{p[0]}</td>
                        <td className={cell}>1</td>
                        <td className={cell}>{p[1]}</td>
                        <td className={cell}>{p[2]}</td>
                        <td className={cell}>Q235B</td>
                        <td className={cell}>{p[3]}</td>
                        <td className="border-b border-[#d2d2d2] py-0 pl-[7px] leading-none"><Check label={`${p[0]} 显示`} checked={p[4]} /></td>
                      </tr>
                    ))}
                    <tr>
                      {[0, 1, 2, 3, 4, 5, 6].map((c) => (
                        <td key={c} className={`h-[21px] ${cell}`} />
                      ))}
                      <td className="border-b border-[#d2d2d2] py-0 pl-[7px] leading-none"><Check label="第9行 显示" checked /></td>
                    </tr>
                  </tbody>
                </table>
              </div>
              <div className="ml-[3px] mt-4 h-[111px] w-2 rounded-full bg-[#cbcbcb]" />
            </div>
            <div className="ml-[14px] mt-[3px] h-2 w-[469px] rounded-full bg-[#cbcbcb]" />
          </div>
          <div className="mt-[59px] h-[224px] border border-[#c8c8c8] pl-[3px] pt-1">
            <div className="h-[18px] leading-5">节点 / 细部三维预览</div>
            <Preview3D />
          </div>
        </div>
      </div>
      <div className="flex justify-end gap-[6px] pr-[10px] pt-2">
        <button type="button" className={`${btn} border-[#c8c8c8] bg-white`}>重新选择</button>
        <button type="button" className={`${btn} border-[#2b7fe5] bg-[#2b7fe5] text-white`}>下一步</button>
        <button type="button" className={`${btn} border-[#c8c8c8] bg-white`}>取消</button>
      </div>
      <svg width="8" height="8" viewBox="0 0 8 8" fill="#777" className="absolute bottom-1 right-1" aria-hidden="true">
        <path d="M6 0h2v2H6zM6 3h2v2H6zM3 3h2v2H3zM6 6h2v2H6zM3 6h2v2H3zM0 6h2v2H0z" />
      </svg>
    </div>
  );
}

/* ---------- canvas ---------- */

function Cube({ fill = "none", stroke = D, top = "none", children }: { fill?: string; stroke?: string; top?: string; children?: React.ReactNode }) {
  return (
    <svg width="20" height="22" viewBox="0 0 20 22" fill="none" stroke={stroke} strokeWidth="1.200" aria-hidden="true">
      <path d="M1 6h14v14.500H1z" fill={fill} /><path d="M1 6l4-4.500h14L15 6z" fill={top} /><path d="M19 1.500v15l-4 4V6z" fill={fill} />
      {children}
    </svg>
  );
}

function Viewport() {
  return (
    <main className="relative ml-[3px] flex min-w-0 flex-1 flex-col justify-end overflow-hidden bg-[#222831]">
      <div className="absolute bottom-0 left-[426px] top-0 w-px bg-[#8a3035]" />
      <div className="absolute left-0 right-0 top-[540px] h-px bg-[#8a3035]" />
      <div className="absolute left-[407px] top-0 flex h-14 w-10 justify-center border-x-2 border-[#5c9dff] bg-[#146cff]"><span className="w-px bg-[#5b58c8]" /></div>
      <svg width="56" height="56" viewBox="0 0 56 56" className="absolute bottom-[42px] left-[40px]" aria-hidden="true">
        <path d="M10 44V22" stroke="#0f0" strokeWidth="4" /><path d="M5 25l5-12 5 12z" fill="#0f0" />
        <path d="M10 48h22" stroke="#f00" strokeWidth="4" /><path d="M28 43l11 5-11 5z" fill="#f00" />
        <circle cx="10" cy="48" r="5" fill="#00b" />
        <text x="5" y="12" fill="#0f0" fontSize="14" fontFamily="Liberation Sans, sans-serif">Y</text>
        <text x="41" y="53" fill="#f00" fontSize="14" fontFamily="Liberation Sans, sans-serif">X</text>
      </svg>
      <div className="absolute right-0 top-0 z-20 flex h-[217px] w-[33px] flex-col items-center rounded-b-[3px] border border-[#d5d5d5] bg-white pt-3">
        <button type="button" aria-label="动态观察"><svg width="22" height="20" viewBox="0 0 22 20" fill="none" stroke={D} strokeWidth="1.200"><circle cx="11" cy="10" r="9" /><path d="M4 9C-2 16 2 18 9 14S23 3 19 1.500q-2-.500-4 .500" stroke={B} /></svg></button>
        <button type="button" aria-label="三维" className="mt-[8px]"><Cube><text x="2" y="17" fill={B} stroke="none" fontSize="8" fontWeight="bold" fontFamily="Liberation Sans, sans-serif">3D</text></Cube></button>
        <button type="button" aria-label="俯视" className="mt-[7px]"><Cube top="#cfe2fb" /></button>
        <span className="mt-[6px] h-3"><Arrow color="#555" /></span>
        <button type="button" aria-label="着色" className="-mt-px"><Cube fill="#cfe2fb" stroke={B} /></button>
        <span className="mt-[6px] h-3"><Arrow color="#555" /></span>
        <button type="button" aria-label="全屏" className="-mt-[3px]"><svg width="22" height="24" viewBox="0 0 22 24" fill="none" stroke={D} strokeWidth="1.800"><path d="M1 7V3q0-2 2-2h4M15 1h4q2 0 2 2v4M21 17v4q0 2-2 2h-4M7 23H3q-2 0-2-2v-4" /></svg></button>
        <span className="mt-[5px] h-px w-[23px] bg-[#666]" />
        <button type="button" aria-label="显示设置" className="mt-[6px]"><svg width="20" height="20" viewBox="0 0 20 20" fill="none" stroke={D} strokeWidth="1.200"><path d="M19 11V1H1v18h9M4 6h3M9 6h7M4 10h3M9 10h4M4 14h3" /><ellipse cx="15" cy="16.500" rx="4" ry="2.800" stroke={B} /><circle cx="15" cy="16.500" r="1" stroke={B} /></svg></button>
      </div>
      <p className="relative flex h-[26px] items-center justify-center gap-[3px] whitespace-nowrap bg-[#353536] pr-1 text-xs font-semibold text-white">
        <Svg stroke="#fff"><path d="M14.500 1.500L9 7M9 2v5h5M1.500 14.500L7 9M7 14V9H2" /></Svg>
        先选择主构件，后选择次构件，按右键确认或ESC退出。比如先选择钢柱，再选择钢梁，按右键确认。
      </p>
    </main>
  );
}

/* ---------- status bar and taskbar ---------- */

function StatusBar() {
  const base = "flex h-[25px] items-center justify-center gap-[5px] rounded-[3px] border";
  const plain = "border-[#9b9b9b] bg-white";
  const on = "border-[#3f86dc] bg-[#d8e7fb]";
  const tools: { l: string; w: boolean; on?: boolean; g: React.ReactNode }[] = [
    { l: "正交", w: false, g: <path d="M2 2v12h13M2 9h4v5" /> },
    { l: "选择方式", w: true, on: true, g: <><rect x="3" y="3" width="12" height="12" rx="2" /><circle cx="2.500" cy="2.500" r="1.600" stroke={B} fill="#fff" /></> },
    { l: "三维捕捉", w: true, on: true, g: <><path d="M8 1l6.500 3.500v7.500L8 15.500 1.500 12V4.500zM8 8l6.500-3.500M8 8v7.500M8 8L1.500 4.500" /><path d="M1 4h3v3H1z" stroke={B} fill="#fff" /></> },
    { l: "交点", w: false, g: <path d="M1 1l14 14M15 1L1 15" stroke="#999" /> },
    { l: "极轴", w: true, g: <><circle cx="7.500" cy="8" r="6.500" /><path d="M7.500 8l5-6M7.500 8h6M12 1v3" /></> },
    { l: "角度", w: true, g: <path d="M1 14L12 2M1 14h14M7 8q4 2 3 6" stroke="#777" /> },
    { l: "动态输入", w: true, on: true, g: <><path d="M4 1v7M.500 4.500h7" stroke={B} /><path d="M6 10h10v5H6z" fill={B} stroke="none" /></> },
    { l: "组合", w: false, g: <><path d="M2.500 2.500h11v11h-11z" /><path d="M1 1h3v3H1zM12 1h3v3h-3zM1 12h3v3H1zM12 12h3v3h-3z" fill="#fff" /><path d="M5 5h4v4H5z" stroke={B} /><circle cx="9.500" cy="9" r="2.800" stroke={B} /></> },
    { l: "归属", w: false, g: <><path d="M1.500 1.500h6v13h-6z" stroke={B} fill="#cfe2fb" /><path d="M9.500 7h5v7.500h-5z" /></> },
    { l: "折线", w: false, g: <><path d="M2 15Q2 8 5 5.500M6 4l6-1.500M4 3h2v2H4zM12 1.500h2v2h-2z" /><path d="M10.500 8l4 4-2 .200-1.500 1.800z" fill={D} /></> },
  ];
  return (
    <footer className="flex h-8 shrink-0 items-center bg-[#fcfcfc] text-xs text-[#333]">
      <div className="flex w-[422px] shrink-0 whitespace-nowrap pl-[2px]">
        <span className="w-[90px]">层高：3.050</span>
        <span className="w-[110px]">底标高：-2.000</span>
        <span className="w-[110px]">选中图元：2</span>
        <span>隐藏图元：0</span>
      </div>
      <div className="flex items-center gap-1 pb-px">
        {tools.map((t) => (
          <button key={t.l} type="button" aria-label={t.l} className={`${base} ${t.w ? "w-[35px]" : "w-6"} ${t.on ? on : plain}`}>
            <Svg>{t.g}</Svg>
            {t.w && <svg width="4" height="4" viewBox="0 0 4 4" aria-hidden="true"><path d="M0 0h4L2 4z" fill="#555" /></svg>}
          </button>
        ))}
        <Combo label="工作平面" options={["无工作平面"]} cls="h-[26px] w-[100px]" />
      </div>
    </footer>
  );
}

function Grip() {
  return (
    <svg width="9" height="32" viewBox="0 0 9 32" className="shrink-0" aria-hidden="true">
      {[0, 4, 8, 12, 16, 20, 24, 28].map((y) => (
        <path key={y} d={`M0 ${y + 1}h2M3.500 ${y + 1}h2M7 ${y + 1}h2`} stroke="#0b2a45" strokeWidth="1.500" />
      ))}
    </svg>
  );
}

function SwirlG({ size }: { size: number }) {
  return (
    <svg width={size} height={size} viewBox="0 0 32 32" aria-hidden="true">
      <path d="M31 2q0 8-9 8-12-2-13 8 1 7 8 7 5-1 6-6l-6 1q2-6 12-6 2 7-1 11-5 6-12 6Q2 30 1 17 2 6 12 2q6-2 11 1 5 1 8-1z" fill="#1187f5" />
      <path d="M12 2q6-2 11 1 5 1 8-1-1 5-7 4Q14 3 5 10q2-5 7-8z" fill="#5cc0ff" />
    </svg>
  );
}

function Taskbar() {
  const app = "flex h-[39px] w-[58px] items-center justify-center rounded-[2px] border border-[#0f3c5e]";
  return (
    <footer className="relative flex h-10 shrink-0 items-center overflow-hidden border-t border-[#1d3550] bg-[linear-gradient(90deg,#1a5b90_0%,#1f669c_4%,#2f88c0_13%,#41a4d6_18%,#66b4df_26%,#45a0d5_34%,#3a93cf_42%,#2b80c4_55%,#2273ba_66%,#1b61a6_72%,#1b5090_78%,#1d4b80_100%)] text-white">
      <svg viewBox="0 0 1920 40" preserveAspectRatio="none" className="absolute inset-0 h-full w-full" aria-hidden="true">
        <path d="M400 24Q700 40 1060 0" stroke="#fff" strokeOpacity=".1" strokeWidth="6" fill="none" />
        <path d="M700 40L900 0h280l60 40z" fill="#fff" fillOpacity=".05" />
        <path d="M1304 0h20q32 16 58 40h-18q-24-24-60-40z" fill="#b9dcff" fillOpacity=".85" />
      </svg>
      <div className="relative flex flex-1 items-center">
        <button type="button" aria-label="开始菜单" className="ml-2">
          <svg width="38" height="38" viewBox="0 0 38 38" className="block">
            <defs>
              <radialGradient id="orb" cx=".5" cy=".9" r=".9">
                <stop offset="0" stopColor="#35c4f0" /><stop offset=".5" stopColor="#17527f" /><stop offset="1" stopColor="#a7c6da" />
              </radialGradient>
            </defs>
            <circle cx="19" cy="19" r="17.500" fill="url(#orb)" stroke="#0d3352" />
            <path d="M10 11q5-3 9 0l-2 8q-4-3-9 0z" fill="#f0562c" />
            <path d="M20 12q4 3 10 0l-2 8q-5 2-10-1z" fill="#8cc63c" />
            <path d="M8 20q4-3 9 0l-2 8q-4-3-9 0z" fill="#3fa2e8" />
            <path d="M18 21q4 2 9 0l-2 8q-5 2-9-1z" fill="#fcc62a" />
          </svg>
        </button>
        <span className="ml-3"><Grip /></span>
        <div className="ml-[9px] flex gap-1">
          <button type="button" aria-label="广联达" className={`${app} bg-white/30`}><SwirlG size={31} /></button>
          <button type="button" aria-label="浏览器" className={`${app} bg-white/30`}>
            <svg width="32" height="32" viewBox="0 0 32 32"><circle cx="16" cy="16" r="14.500" fill="#fff" /><path d="M9 17h16q0-10-9-10T6 17q1 10 10 9 6 0 8-5h-5q-2 2-5 1-4-1-5-5zm1-3q2-4 6-4t5 4z" fill="#55b81e" fillRule="evenodd" /><path d="M3 22Q12 3 29 2q-3 1-4 4Q14 7 3 22z" fill="#8fd62e" /></svg>
          </button>
          <button type="button" aria-label="钢结构计量" className={`${app} bg-white/60`}>
            <svg width="32" height="32" viewBox="0 0 32 32"><rect width="32" height="32" rx="5" fill="#d6f3f3" /><path d="M7 7q8-1 17 0v4q-5 1-5 3v5q0 2 5 3v4q-9 1-17 0v-4q5-1 5-3v-5q0-2-5-3z" fill="#22b4b6" /></svg>
          </button>
        </div>
      </div>
      <div className="relative flex items-center">
        <Grip />
        <svg width="16" height="16" viewBox="0 0 16 16" className="mb-1 ml-[8px]" aria-hidden="true"><rect x=".5" y="6" width="15" height="9" fill="#ddd" stroke="#777" /><path d="M2 8.500h12M2 10.500h12M4 12.800h8" stroke="#666" strokeDasharray="1 1" /><path d="M6 6q0-3 4-2t4-3" stroke="#ddd" fill="none" /></svg>
        <svg width="16" height="16" viewBox="0 0 16 16" className="mb-1 ml-[6px]" aria-hidden="true"><circle cx="8" cy="8" r="7.300" fill="#12129a" stroke="#ccd" /><text x="8" y="12.500" fontSize="12" fontWeight="bold" textAnchor="middle" fill="#fff" fontFamily="Liberation Sans, sans-serif">?</text></svg>
        <span className="mb-[6px] ml-[9px] flex flex-col items-center gap-[6px]">
          <svg width="9" height="7" viewBox="0 0 9 7" fill="none" stroke="#fff" aria-hidden="true"><path d="M.5 2.500h5v4h-5zM3 2.500v-2h5.500V5h-3" /></svg>
          <svg width="6" height="3" viewBox="0 0 6 3" aria-hidden="true"><path d="M0 0h6L3 3z" fill="#fff" /></svg>
        </span>
        <span className="ml-[9px] flex items-center gap-2">
          <SwirlG size={16} />
          <svg width="16" height="16" viewBox="0 0 16 16" aria-hidden="true"><rect width="16" height="16" rx="1" fill="#fff" /><path d="M12 2q-7-1-8 4 0 4 4 4 3 0 4-3H9" stroke="#1782e6" strokeWidth="2" fill="none" /><path d="M1 11h14v4H1z" fill="#ee7a2a" /><path d="M1 13h14M5 11v2M10 11v2M8 13v2" stroke="#fff" strokeWidth=".6" /></svg>
          <svg width="16" height="16" viewBox="0 0 16 16" aria-hidden="true"><circle cx="8" cy="8" r="7.500" fill="#7bc832" /><path d="M4 8.500h8Q12 4 8 4T4 8.500Q4.500 12 8 12q3 0 4-2" stroke="#fff" strokeWidth="1.800" fill="none" /></svg>
          <svg width="16" height="16" viewBox="0 0 16 16" aria-hidden="true"><path d="M2 0h5v3h1v5H6v5H3V8H1V3h1z" fill="#a9a9a9" /><circle cx="11" cy="11" r="5" fill="#2aa83b" /><path d="M8.500 11l2 2 3-4" stroke="#fff" strokeWidth="1.500" fill="none" /></svg>
          <svg width="16" height="16" viewBox="0 0 16 16" aria-hidden="true"><path d="M1 5h4l5-4v14l-5-4H1z" fill="#e0684a" stroke="#f3c4b8" /><path d="M12 4q3 4 0 8" stroke="#933" fill="none" /></svg>
          <svg width="16" height="16" viewBox="0 0 16 16" aria-hidden="true"><circle cx="8" cy="8" r="7.500" fill="#f6d21c" /><path d="M.5 8a7.500 7.500 0 0 0 15 0q-7 5-15 0z" fill="#6cb82a" /><path d="M8 4v8M4 8h8" stroke="#0d6b1d" strokeWidth="2.200" /></svg>
          <svg width="16" height="16" viewBox="0 0 16 16" aria-hidden="true"><rect width="16" height="16" rx="3" fill="#fbab18" /><path d="M4 11q-2-1-1-3 2-2 4 0l3 3q3 1 4-1 0-3-3-3-1-3-4-2" stroke="#fff" strokeWidth="1.500" fill="none" /></svg>
          <svg width="16" height="12" viewBox="0 0 16 12" fill="#fff" aria-hidden="true"><path d="M0 10h2v2H0zM3.500 8h2v4h-2zM7 6h2v6H7zM10.500 3h2v9h-2zM14 0h2v12h-2z" /></svg>
          <svg width="16" height="14" viewBox="0 0 16 14" aria-hidden="true"><path d="M1 4h3l4-4v14l-4-4H1z" fill="#fff" /><path d="M10 4q2 3 0 6M12.500 2q3 5 0 10" stroke="#fff" fill="none" /></svg>
        </span>
        <time className="ml-[9px] w-[70px] text-center text-xs leading-[18px]">16:21<br />2024/12/16</time>
        <svg width="17" height="15" viewBox="0 0 17 15" className="ml-[14px]" aria-hidden="true"><path d="M0 0h17v15H0z" fill="#fff" /><path d="M6 5h2q3 1 3 2.500T8 10H6z" fill="#12243f" /></svg>
        <button type="button" aria-label="显示桌面" className="ml-[11px] h-[39px] w-[14px] border border-[#6f9ac4] bg-white/10" />
      </div>
    </footer>
  );
}

export default function App() {
  return (
    <div className={`flex h-screen flex-col overflow-hidden bg-white ${FONT}`}>
      <Header />
      <Ribbon />
      <div className="flex h-[26px] shrink-0 items-center gap-1 bg-[#f1f1f1] pl-[3px]">
        <Combo label="楼层" options={["基础层"]} cls="h-[22px] w-[98px]" />
        <Combo label="分类" options={["主构件"]} cls="h-[22px] w-[98px]" />
        <Combo label="类型" options={["钢梁"]} cls="h-[22px] w-[98px]" />
        <Combo label="构件" options={["GL-1"]} cls="h-[22px] w-[98px]" />
      </div>
      <div className="relative flex min-h-0 flex-1">
        <NavPanel />
        <MidColumn />
        <Viewport />
        <div className="-mr-1 mt-[372px] flex h-[100px] w-1 shrink-0 items-center self-start bg-[#5f6975]">
          <svg width="4" height="6" viewBox="0 0 4 6" aria-hidden="true"><path d="M0 0l4 3-4 3z" fill="#c3c8cf" /></svg>
        </div>
        <SettingsPanel />
        <Dialog />
      </div>
      <StatusBar />
      <Taskbar />
    </div>
  );
}
